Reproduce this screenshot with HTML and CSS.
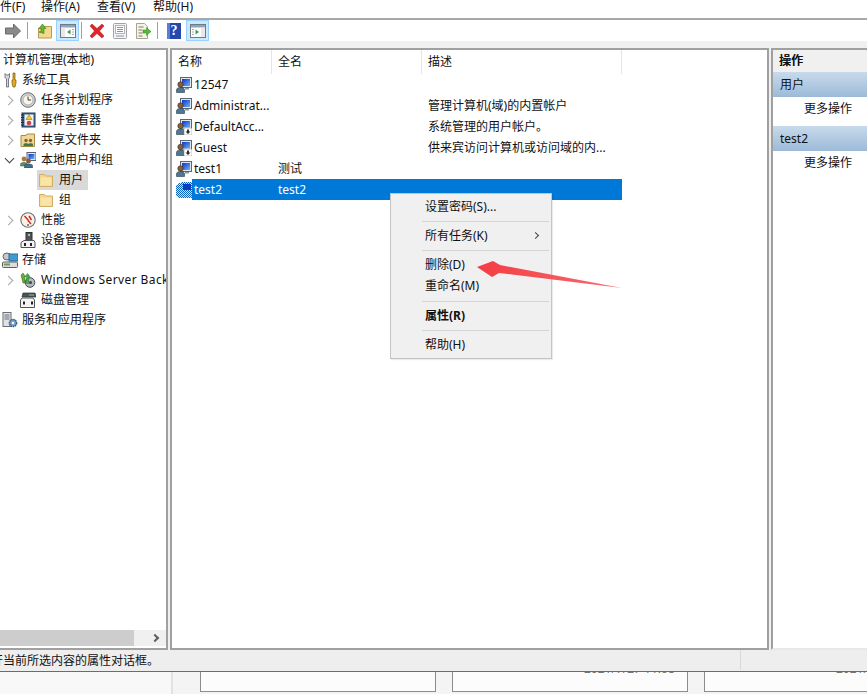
FILE: index.html
```html
<!DOCTYPE html>
<html lang="zh">
<head>
<meta charset="utf-8">
<title>计算机管理</title>
<link rel="stylesheet" href="styles.css">
</head>
<body>
<svg class="defs" width="0" height="0">
  <defs>
    <linearGradient id="scr" x1="0" y1="0" x2="1" y2="1"><stop offset="0" stop-color="#1030c8"/><stop offset="1" stop-color="#6ab4f4"/></linearGradient>
    <pattern id="dith" width="2" height="2" patternUnits="userSpaceOnUse"><rect width="2" height="2" fill="#cfe4f8"/><rect width="1" height="1" fill="#0a62c0"/><rect x="1" y="1" width="1" height="1" fill="#0a62c0"/></pattern>
    <symbol id="user" viewBox="0 0 16 16">
      <rect x="4.500" y="0.500" width="11" height="10" fill="#dfe6ee" stroke="#5c6672"/>
      <rect x="6" y="2" width="8" height="7" fill="url(#scr)"/>
      <rect x="9" y="11" width="4" height="1.500" fill="#8c96a0"/>
      <circle cx="4.500" cy="7.500" r="2.700" fill="#84603f" stroke="#3a2a20" stroke-width=".6"/>
      <path d="M0.500 15.500v-2.500c0-1.800 2-2.500 4-2.500s4 .7 4 2.500v2.500z" fill="#4d7894" stroke="#2a3c4c" stroke-width=".6"/>
    </symbol>
    <symbol id="userd" viewBox="0 0 16 16">
      <rect x="4.500" y="0.500" width="11" height="9.500" fill="#dfe6ee" stroke="#5c6672"/>
      <rect x="6" y="2" width="8" height="6.500" fill="url(#scr)"/>
      <circle cx="4.500" cy="7" r="2.700" fill="#84603f" stroke="#3a2a20" stroke-width=".6"/>
      <path d="M0.500 15.500v-3c0-1.800 2-2.500 4-2.500s3.500 .6 3.500 1.500v4z" fill="#4d7894" stroke="#2a3c4c" stroke-width=".6"/>
      <rect x="8" y="9" width="8" height="7" rx="1" fill="#fff" stroke="#9a9a9a" stroke-width=".6"/>
      <path d="M11 10.500h2v2h1.500l-2.500 2.500-2.500-2.500h1.500z" fill="#303030"/>
    </symbol>
    <symbol id="usersel" viewBox="0 0 16 16">
      <rect width="16" height="16" fill="url(#dith)"/>
      <rect x="7" y="2" width="8" height="6" fill="#0c3cc0"/>
      <path d="M0 0h5v1h-3v2h-2zM0 14h2v2h-2z" fill="#fff"/>
    </symbol>
    <symbol id="folder" viewBox="0 0 16 16">
      <path d="M1.500 14.500v-12h5l1.500 1.500h6.500v10.500z" fill="#f4d68a" stroke="#d0b068"/>
      <path d="M2.500 5.500h11v8h-11z" fill="#fbe5a6"/>
    </symbol>
    <symbol id="tools" viewBox="0 0 16 16">
      <path d="M3 1.500v4l1.500 1.500v8h2v-8l1-1.500v-4l-1 1.500h-2z" fill="#d4d8dc" stroke="#5a5f66" stroke-width=".8"/>
      <path d="M11 1h2v7h1v3l-1 4h-2l-1-4v-3h1z" fill="#e4aa20" stroke="#7a5a10" stroke-width=".7"/>
    </symbol>
    <symbol id="clock" viewBox="0 0 16 16">
      <circle cx="8" cy="8" r="7.300" fill="#cfd3d8" stroke="#6b6f76"/>
      <circle cx="8" cy="8" r="5" fill="#fbf5e4" stroke="#8a8f96" stroke-width=".6"/>
      <path d="M8 4.500v3.500h3" fill="none" stroke="#38404a" stroke-width="1"/>
    </symbol>
    <symbol id="log" viewBox="0 0 16 16">
      <rect x="2" y="1" width="13" height="14" fill="#3c6490" stroke="#24405e"/>
      <rect x="4.500" y="2.500" width="9" height="11" fill="#f2f2f2"/>
      <path d="M1 3h3M1 5.500h3M1 8h3M1 10.500h3M1 13h3" stroke="#1e2c3c"/>
      <path d="M9 2.500l3 5h-6z" fill="#f4c830" stroke="#8a6a10" stroke-width=".5"/>
      <circle cx="9" cy="11" r="2.300" fill="#d84040"/>
    </symbol>
    <symbol id="share" viewBox="0 0 16 16">
      <path d="M1 14.500v-11h5l1 -1.500h7.500v12.500z" fill="#f0d898" stroke="#a88a40"/>
      <circle cx="6" cy="8.500" r="1.700" fill="#8a6038"/><circle cx="10.500" cy="8.500" r="1.700" fill="#8a6038"/>
      <path d="M3.500 14v-2c0-1 5-1 5 0v2zM8.500 14v-2c0-1 4.500-1 4.500 0v2z" fill="#3b7a52"/>
    </symbol>
    <symbol id="group" viewBox="0 0 16 16">
      <rect x="7" y="0.500" width="9" height="8" fill="#dfe6ee" stroke="#56606c"/>
      <rect x="8.500" y="2" width="6" height="5" fill="url(#scr)"/>
      <circle cx="4" cy="7" r="2.400" fill="#a87848"/><path d="M0.500 14v-2c0-2 7-2 7 0v2z" fill="#5b9060" stroke="#3a5a40" stroke-width=".5"/>
      <circle cx="8.500" cy="9" r="2.400" fill="#8a5a38"/><path d="M4.500 16v-2.500c0-2 8-2 8 0v2.500z" fill="#3e6f96" stroke="#26384a" stroke-width=".5"/>
    </symbol>
    <symbol id="perf" viewBox="0 0 16 16">
      <circle cx="8" cy="8" r="7.200" fill="#f6f1e4" stroke="#6b6f76" stroke-width="1.100"/>
      <path d="M4.500 4l4 4.500M8 8.500l3 3.500M9 4l2.500 4" stroke="#d02a2a" stroke-width="1.500" fill="none"/>
      <circle cx="8" cy="13" r="1" fill="#666"/>
    </symbol>
    <symbol id="devmgr" viewBox="0 0 16 16">
      <rect x="6" y="0.500" width="6" height="8" fill="#505458" stroke="#2e3236"/>
      <rect x="8" y="2" width="2" height="2" fill="#9cd07c"/>
      <path d="M1 15.500v-5l3-2h10l1 2v5z" fill="#f2f2f2" stroke="#50545a"/>
      <rect x="4" y="11" width="2" height="3" fill="#222"/><rect x="10" y="11" width="2" height="3" fill="#222"/>
    </symbol>
    <symbol id="storage" viewBox="0 0 16 16">
      <ellipse cx="5" cy="4.500" rx="4" ry="3.500" fill="#c6c8ca" stroke="#64686e"/>
      <rect x="7" y="2" width="9" height="7" fill="#3f9ad4" stroke="#2f6a96"/>
      <rect x="0.500" y="10" width="15" height="5.500" rx="1" fill="#dcdcdc" stroke="#5c6066"/>
      <rect x="2" y="11.500" width="6" height="2" fill="#6f9a5a"/>
    </symbol>
    <symbol id="wsb" viewBox="0 0 16 16">
      <path d="M1 3l2-2 2 3v7h-2z" fill="#6ca838" stroke="#35621c" stroke-width=".5"/>
      <circle cx="10" cy="10.500" r="4.800" fill="#b4b8bc" stroke="#44484e"/>
      <path d="M7.500 1.500l2.500 3h-1.500v7h-2v-7h-1.500z" fill="#3cb04a" stroke="#1d7a2c" stroke-width=".5"/>
      <circle cx="10.500" cy="10.500" r="1.500" fill="#404448"/>
    </symbol>
    <symbol id="disk" viewBox="0 0 16 16">
      <path d="M3 1h12l1 4h-14z" fill="#4e5458" stroke="#2a2e32" stroke-width=".7"/>
      <path d="M9 3h5" stroke="#88cc70"/>
      <path d="M0.500 15.500v-7.500l1.500-2h11l1.500 2v7.500z" fill="#f4f4f4" stroke="#50545a"/>
      <rect x="3" y="9.500" width="2" height="3" fill="#222"/><rect x="11" y="9.500" width="2" height="3" fill="#222"/>
    </symbol>
    <symbol id="svc" viewBox="0 0 16 16">
      <rect x="1" y="0.500" width="8" height="14" fill="#e0e2e6" stroke="#6a6e76"/>
      <path d="M2.500 3h5M2.500 5h5M2.500 7h5" stroke="#6a6e76"/>
      <circle cx="11" cy="11" r="3.600" fill="#7aa0c8" stroke="#3c5f86" stroke-dasharray="1.500 .6" stroke-width="1.500"/>
      <circle cx="11" cy="11" r="1.200" fill="#fff"/>
    </symbol>
  </defs>
</svg>

<div class="menubar">
  <span class="menu-item menu-cut">文件(F)</span>
  <span class="menu-item">操作(A)</span>
  <span class="menu-item">查看(V)</span>
  <span class="menu-item">帮助(H)</span>
</div>

<div class="toolbar">
  <span class="tool tool-arrow"><svg width="16" height="16" viewBox="0 0 16 16"><path d="M0.500 5h8v-4l7 7-7 7v-4h-8z" fill="#8a8a8a" stroke="#6a6a6a"/></svg></span>
  <i class="tsep tsep-a"></i>
  <span class="tool tool-up"><svg width="16" height="16" viewBox="0 0 16 16"><path d="M1.500 15v-10h4l1-1.500h8v11.500z" fill="#f3d88e" stroke="#b89a50"/><path d="M2 9l2-.5v-3h-2l3.500-4.500 3.500 4.500h-2v5z" fill="#66b832" stroke="#3d7f18" stroke-width=".6"/></svg></span>
  <span class="tool tool-on"><svg width="16" height="16" viewBox="0 0 16 16"><rect x="0.500" y="1.500" width="15" height="13" fill="#fff" stroke="#6f7a84"/><rect x="1" y="2" width="14" height="2.500" fill="#8ea4b8"/><rect x="1" y="4.500" width="4" height="9.500" fill="#e8e8e8"/><path d="M10.500 6.500v5l-3.500-2.500z" fill="#3aa050"/><path d="M12 6.500h2M12 9h2M12 11.500h2" stroke="#a0a8b0"/></svg></span>
  <i class="tsep tsep-b"></i>
  <span class="tool tool-x"><svg width="16" height="16" viewBox="0 0 16 16"><path d="M1 3l2-2 5 4.500 5-4.500 2 2-4.500 5 4.500 5-2 2-5-4.500-5 4.500-2-2 4.500-5z" fill="#e0242a" stroke="#a81a1e" stroke-width=".5"/></svg></span>
  <span class="tool tool-doc"><svg width="16" height="16" viewBox="0 0 16 16"><rect x="1.500" y="0.500" width="13" height="15" rx="1" fill="#f3f3f3" stroke="#a0a4a8"/><rect x="3.500" y="2.500" width="9" height="8" fill="#fff" stroke="#b0b4b8"/><path d="M5 4.500h6M5 6.500h6M5 8.500h6M4 13h8" stroke="#8a949e"/></svg></span>
  <span class="tool tool-exp"><svg width="16" height="16" viewBox="0 0 16 16"><path d="M1.500 0.500h8l3 3v12h-11z" fill="#f8f4e4" stroke="#a8a490"/><path d="M3.500 4h5M3.500 7h4M3.500 10h4M3.500 13h4" stroke="#7a7a70"/><path d="M8 7h3.500v-2.500l4.500 4-4.500 4v-2.500h-3.500z" fill="#54b838" stroke="#2f8020" stroke-width=".5"/></svg></span>
  <i class="tsep tsep-c"></i>
  <span class="tool tool-help"><svg width="14" height="16" viewBox="0 0 14 16"><rect width="14" height="16" fill="#2448b0"/><rect x="0" y="0" width="3" height="16" fill="#5b7cd0"/></svg><b class="qmark">?</b></span>
  <span class="tool tool-on tool-on2"><svg width="16" height="16" viewBox="0 0 16 16"><rect x="0.500" y="1.500" width="15" height="13" fill="#fff" stroke="#6f7a84"/><rect x="1" y="2" width="14" height="2.500" fill="#8ea4b8"/><rect x="11" y="4.500" width="4" height="9.500" fill="#e8e8e8"/><path d="M5.500 6.500v5l3.500-2.500z" fill="#3aa050"/><path d="M2 6.500h2M2 9h2M2 11.500h2" stroke="#a0a8b0"/></svg></span>
</div>

<div class="band"></div>

<main class="panes">
  <section class="tree">
    <div class="tree-rows">
      <div class="node d0 root"><span>计算机管理(本地)</span></div>
      <div class="node d0"><svg class="ic"><use href="#tools"/></svg><span>系统工具</span></div>
      <div class="node d1"><i class="chev"></i><svg class="ic"><use href="#clock"/></svg><span>任务计划程序</span></div>
      <div class="node d1"><i class="chev"></i><svg class="ic"><use href="#log"/></svg><span>事件查看器</span></div>
      <div class="node d1"><i class="chev"></i><svg class="ic"><use href="#share"/></svg><span>共享文件夹</span></div>
      <div class="node d1"><i class="chev open"></i><svg class="ic"><use href="#group"/></svg><span>本地用户和组</span></div>
      <div class="node d2 current"><svg class="ic"><use href="#folder"/></svg><span>用户</span></div>
      <div class="node d2"><svg class="ic"><use href="#folder"/></svg><span>组</span></div>
      <div class="node d1"><i class="chev"></i><svg class="ic"><use href="#perf"/></svg><span>性能</span></div>
      <div class="node d1"><i class="chev none"></i><svg class="ic"><use href="#devmgr"/></svg><span>设备管理器</span></div>
      <div class="node d0"><svg class="ic"><use href="#storage"/></svg><span>存储</span></div>
      <div class="node d1"><i class="chev"></i><svg class="ic"><use href="#wsb"/></svg><span class="wide">Windows Server Back</span></div>
      <div class="node d1"><i class="chev none"></i><svg class="ic"><use href="#disk"/></svg><span>磁盘管理</span></div>
      <div class="node d0"><svg class="ic"><use href="#svc"/></svg><span>服务和应用程序</span></div>
    </div>
    <div class="hscroll"><div class="thumb"></div><i class="hchev"></i></div>
  </section>

  <section class="list">
    <div class="row head">
      <div class="c1">名称</div><div class="c2">全名</div><div class="c3">描述</div>
    </div>
    <div class="row"><svg class="ic"><use href="#user"/></svg><div class="c1">12547</div><div class="c2"></div><div class="c3"></div></div>
    <div class="row"><svg class="ic"><use href="#user"/></svg><div class="c1">Administrat...</div><div class="c2"></div><div class="c3">管理计算机(域)的内置帐户</div></div>
    <div class="row"><svg class="ic"><use href="#userd"/></svg><div class="c1">DefaultAcc...</div><div class="c2"></div><div class="c3">系统管理的用户帐户。</div></div>
    <div class="row"><svg class="ic"><use href="#userd"/></svg><div class="c1">Guest</div><div class="c2"></div><div class="c3">供来宾访问计算机或访问域的内...</div></div>
    <div class="row"><svg class="ic"><use href="#user"/></svg><div class="c1">test1</div><div class="c2">测试</div><div class="c3"></div></div>
    <div class="row selected"><svg class="ic"><use href="#usersel"/></svg><div class="sel"><div class="c1">test2</div><div class="c2">test2</div><div class="c3"></div></div></div>
  </section>

  <aside class="actions">
    <div class="act-head">操作</div>
    <div class="act-band">用户</div>
    <div class="act-item">更多操作</div>
    <div class="act-band act-band2">test2</div>
    <div class="act-item">更多操作</div>
  </aside>
</main>

<footer class="status">
  <div class="status-main"><span class="status-text">打开当前所选内容的属性对话框。</span></div>
  <div class="status-end"></div>
</footer>

<div class="behind">
  <div class="behind-side"></div>
  <div class="behind-box b1"></div>
  <div class="behind-box b2"><span class="clip-date">2021/7/27 11:08</span></div>
  <div class="behind-box b3"><span class="clip-date">2021/7/27 11:08</span></div>
</div>

<div class="ctx">
  <div class="ctx-item">设置密码(S)...</div>
  <hr class="ctx-sep">
  <div class="ctx-item">所有任务(K)<i class="ctx-arrow"></i></div>
  <hr class="ctx-sep">
  <div class="ctx-item">删除(D)</div>
  <div class="ctx-item ctx-tall">重命名(M)</div>
  <hr class="ctx-sep">
  <div class="ctx-item ctx-bold">属性(R)</div>
  <hr class="ctx-sep">
  <div class="ctx-item">帮助(H)</div>
</div>

<svg class="redarrow" width="160" height="40" viewBox="470 255 160 40">
  <defs><linearGradient id="redfade" x1="0" y1="0" x2="1" y2="0"><stop offset="0" stop-color="#f53c44"/><stop offset="1" stop-color="#f86a6e"/></linearGradient></defs>
  <polygon points="477,267 493,261 500,265 622,288 499,273 492,277" fill="url(#redfade)"/>
</svg>
</body>
</html>
```
FILE: styles.css
```css
* { box-sizing: border-box; }
html, body { margin: 0; height: 100%; }
body {
  width: 867px;
  height: 694px;
  overflow: hidden;
  position: relative;
  display: flex;
  flex-direction: column;
  background: #fff;
  color: #111;
  font: 12px/20px "Noto Sans", "Noto Sans CJK SC", sans-serif;
}
.defs { position: absolute; }

.menubar {
  height: 20px;
  flex: none;
  display: flex;
  gap: 20px;
  margin-left: -12px;
  line-height: 14px;
  position: relative;
}
.menu-cut { margin-right: -3px; }
.menu-item { width: 36px; white-space: nowrap; }
.menubar::after {
  content: "";
  position: absolute;
  left: 12px;
  right: 0;
  bottom: 0;
  height: 2px;
  background: #a8a8a8;
}

.toolbar {
  height: 21px;
  flex: none;
  display: flex;
  align-items: center;
  padding-left: 5px;
}
.tool { position: relative; display: flex; align-items: center; justify-content: center; flex: none; }
.tool svg { display: block; }
.tool-arrow { width: 16px; margin-right: 6px; }
.tool-up { width: 16px; margin-left: 9px; margin-right: 3px; }
.tool-on {
  width: 23px;
  height: 21px;
  background: #cce8ff;
  border: 1px solid #99d1ff;
}
.tool-x { width: 16px; margin-left: 7px; }
.tool-doc { width: 16px; margin-left: 7px; }
.tool-exp { width: 16px; margin-left: 7px; margin-right: 6px; }
.tool-help { width: 14px; height: 16px; margin-left: 9px; margin-right: 5px; }
.qmark {
  position: absolute;
  inset: 0;
  color: #fff;
  font: bold 14px/16px "Liberation Serif", serif;
  text-align: center;
}
.tsep { flex: none; width: 1px; height: 17px; background: #a0a0a0; }
.tsep-b { margin-left: 2px; }

.band { height: 7px; flex: none; background: #f0f0f0; }

.panes {
  height: 602px;
  flex: none;
  display: grid;
  grid-template-columns: 168px 599px 96px;
  column-gap: 2px;
  background: #f0f0f0;
}
.tree {
  background: #fff;
  border-top: 2px solid #a0a0a0;
  border-right: 2px solid #a0a0a0;
  border-bottom: 2px solid #a0a0a0;
  display: flex;
  flex-direction: column;
  overflow: hidden;
}
.tree-rows { flex: 1; min-height: 0; }
.node {
  height: 20px;
  display: flex;
  align-items: center;
  white-space: nowrap;
  overflow: hidden;
}
.node .ic { width: 16px; height: 16px; flex: none; }
.wide { letter-spacing: .4px; }
.d0 { padding-left: 2px; }
.d0 .ic { margin-right: 4px; }
.root { padding-left: 3px; }
.d1 { padding-left: 3px; }
.d1 .ic { margin-left: 7px; margin-right: 5px; }
.d2 { margin-left: 37px; width: 51px; padding-left: 1px; }
.d2 .ic { margin-right: 5px; }
.current { background: #d9d9d9; }
.chev {
  flex: none;
  width: 10px;
  height: 10px;
  position: relative;
}
.chev::before {
  content: "";
  position: absolute;
  left: 2px;
  top: 2px;
  width: 6px;
  height: 6px;
  border-top: 1.500px solid #a6a6a6;
  border-right: 1.500px solid #a6a6a6;
  transform: rotate(45deg);
}
.chev.open::before {
  left: 3px;
  top: 0;
  border-color: #404040;
  transform: rotate(135deg);
}
.chev.none::before { display: none; }
.hscroll {
  height: 16px;
  flex: none;
  background: #f0f0f0;
  position: relative;
  margin-bottom: 2px;
}
.thumb { width: 134px; height: 16px; background: #cdcdcd; }
.hchev {
  position: absolute;
  right: 8px;
  top: 5px;
  width: 6px;
  height: 6px;
  border-top: 2px solid #606060;
  border-right: 2px solid #606060;
  transform: rotate(45deg);
}

.list {
  background: #fff;
  border: 2px solid #a0a0a0;
  padding-left: 4px;
  overflow: hidden;
}
.row {
  height: 21px;
  display: flex;
  align-items: center;
  white-space: nowrap;
}
.row .ic { width: 16px; height: 16px; flex: none; }
.row .c1 { width: 84px; padding-left: 2px; }
.row .c2 { width: 150px; padding-left: 2px; }
.row .c3 { width: 196px; padding-left: 2px; }
.head { height: 24px; }
.head > div { height: 24px; line-height: 23px; border-right: 1px solid #e5e5e5; }
.row.head .c1 { width: 96px; padding-left: 2px; }
.row.head .c2 { width: 150px; padding-left: 6px; }
.row.head .c3 { width: 200px; padding-left: 6px; }
.sel {
  display: flex;
  width: 430px;
  height: 21px;
  line-height: 21px;
  background: #0078d7;
  color: #fff;
}

.actions {
  background: #fff;
  border-top: 2px solid #a0a0a0;
  border-left: 2px solid #a0a0a0;
  border-bottom: 2px solid #e8e8e8;
  overflow: hidden;
}
.act-head {
  height: 22px;
  line-height: 21px;
  padding-left: 6px;
  background: #f0f0f0;
  font-weight: 500;
  text-shadow: 0.300px 0 0 #111;
}
.act-band {
  height: 25px;
  line-height: 26px;
  padding-left: 7px;
  background: linear-gradient(#c8daec, #9cbad8);
}
.act-item { height: 29px; line-height: 24px; padding-left: 31px; }
.act-item:last-child { height: 24px; }

.status {
  height: 22px;
  flex: none;
  display: flex;
  background: #eeeeee;
  border-bottom: 1px solid #2b7cc4;
  overflow: hidden;
}
.status-main { width: 741px; border-right: 1px solid #d8d8d8; height: 20px; overflow: hidden; }
.status-text { display: block; margin-left: -21px; line-height: 21px; white-space: nowrap; }
.status-end { flex: 1; }

.behind {
  height: 22px;
  flex: none;
  display: flex;
  background: #f4f4f4;
  overflow: hidden;
}
.behind-side { width: 173px; background: #f8f8f8; border-right: 2px solid #e2e2e2; flex: none; }
.behind-box {
  flex: none;
  width: 236px;
  height: 20px;
  background: #fcfcfc;
  border: 1px solid #8c8c8c;
  border-top: 0;
  overflow: hidden;
}
.b1 { margin-left: 27px; }
.b2 { margin-left: 16px; padding-left: 131px; }
.b3 { margin-left: 16px; padding-left: 131px; }
.clip-date { display: block; margin-top: -13px; color: #777; white-space: nowrap; line-height: 20px; }

.ctx {
  position: absolute;
  left: 390px;
  top: 193px;
  width: 162px;
  height: 166px;
  padding-top: 3px;
  background: #f0f0f0;
  border: 1px solid #c4c4c4;
  box-shadow: 1px 1px 1px rgba(0,0,0,.08);
}
.ctx-item {
  position: relative;
  height: 19px;
  line-height: 19px;
  padding-left: 34px;
  white-space: nowrap;
}
.ctx-tall { height: 22px; line-height: 24px; }
.ctx-bold { font-weight: 700; }
.ctx-sep {
  margin: 5px 2px 4px 31px;
  border: 0;
  height: 1px;
  background: #d4d4d4;
}
.ctx-arrow {
  position: absolute;
  right: 13px;
  top: 7px;
  width: 5px;
  height: 5px;
  border-top: 1px solid #444;
  border-right: 1px solid #444;
  transform: rotate(45deg);
}
.redarrow { position: absolute; left: 470px; top: 255px; }
```
